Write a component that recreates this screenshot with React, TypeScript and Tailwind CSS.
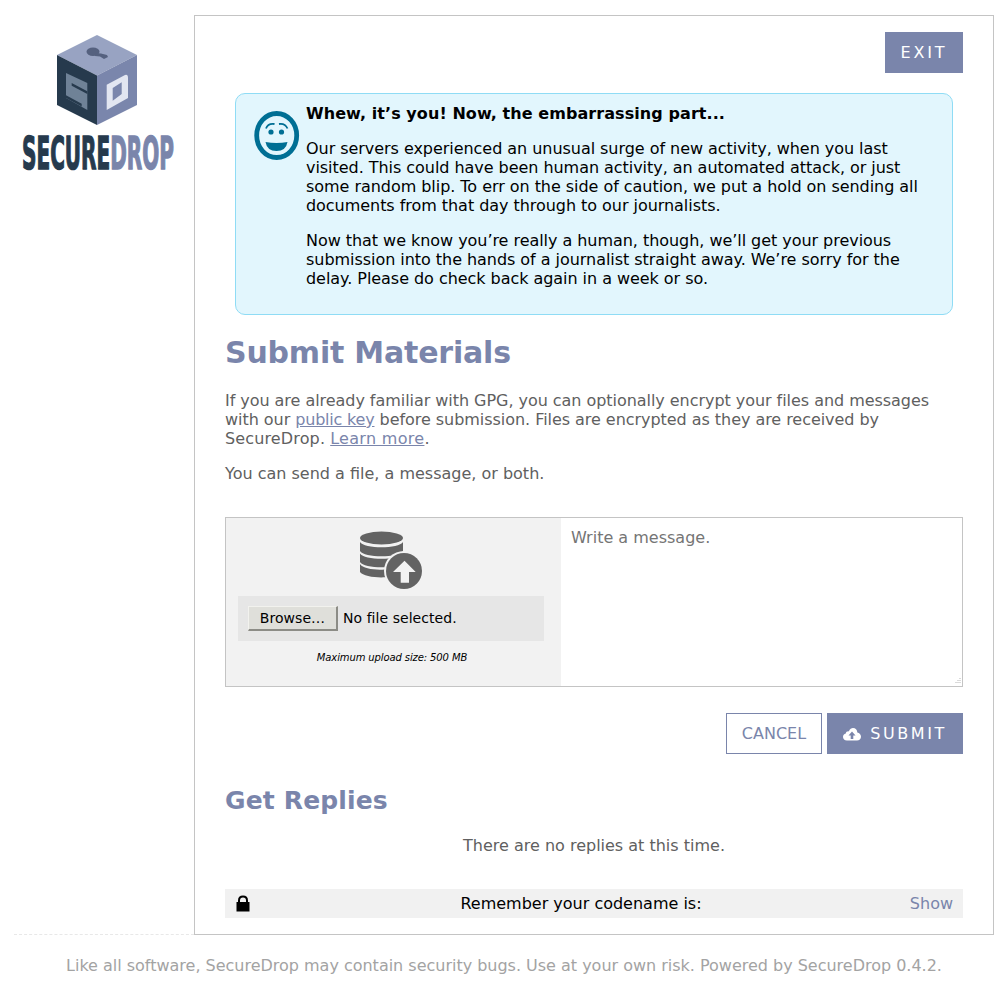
import React from "react";

function Cube() {
  return (
    <svg width="80" height="90" viewBox="0 0 80 90" className="block">
      <polygon points="40,0 80,20 40,40.500 0,20" fill="#98a3c2" />
      <polygon points="0,20 40,40.500 40,90 0,70" fill="#263a4d" />
      <polygon points="80,20 40,40.500 40,90 80,70" fill="#7a86ac" />
      <ellipse cx="36" cy="16.800" rx="6.500" ry="4.200" fill="#55617f" />
      <path d="M38 18 L44 18.500 L50 20 L51 22 L47 24 L43 21.500 L38 21Z" fill="#55617f" />
      <polygon points="9,38 30.300,48 30.300,75 9,63" fill="#6f8297" />
      <polygon points="14.700,48 30.300,56.300 30.300,59 14.700,50.700" fill="#263a4d" />
      <polygon points="9,60.300 24.700,68.700 24.700,71.400 9,63" fill="#263a4d" />
      <path fillRule="evenodd" d="M49.700 49.700 L68 40 Q71 39 71 43 L71 63 L49.700 75Z M55.700 53 L55.700 65.700 L64.700 59 L64.700 47.300Z" fill="#e2e6f1" />
    </svg>
  );
}

function Smile() {
  return (
    <svg width="48" height="52" viewBox="0 0 48 52" className="block">
      <ellipse cx="23.700" cy="25.500" rx="20" ry="22" fill="none" stroke="#006f94" strokeWidth="4.800" />
      <circle cx="18" cy="22" r="2.600" fill="#006f94" />
      <circle cx="28.500" cy="22" r="2.600" fill="#006f94" />
      <path d="M13 18.500 Q15 13 21.500 14 M26 14 Q32 13 34.500 18.500" fill="none" stroke="#006f94" strokeWidth="1.800" />
      <path d="M12.500 32 Q23.500 34 34.500 32 Q33 41 23.500 41 Q14 41 12.500 32Z" fill="#006f94" />
    </svg>
  );
}

function UploadDb() {
  return (
    <svg width="64" height="60" viewBox="0 0 64 60" className="block">
      <ellipse cx="22.500" cy="7" rx="21.500" ry="6.500" fill="#636363" />
      <path d="M1 11 C5 18 40 18 44 11 V20 C40 27 5 27 1 20Z" fill="#636363" />
      <path d="M1 22.500 C5 29.500 40 29.500 44 22.500 V31 C40 38 5 38 1 31Z" fill="#636363" />
      <path d="M1 33 C5 40 30 40 36 36 V44 C30 48 5 47 1 41Z" fill="#636363" />
      <circle cx="45" cy="40" r="20" fill="#f2f2f2" />
      <circle cx="45" cy="40" r="18" fill="#636363" />
      <path d="M45.500 29.700 L56.700 41 H50 V51.700 H41.700 V41 H34Z" fill="#f2f2f2" />
    </svg>
  );
}

function CloudUp() {
  return (
    <svg width="18" height="14" viewBox="0 0 18 14" className="block">
      <path d="M4 13.500 C1.500 13.500 0 11.800 0 10 C0 8.300 1 7 2.800 6.600 C3 4.800 4.500 4 5.800 4.400 C6.800 2 8.500 1 10 1 C12.500 1 14.300 3 14.300 5.500 C16.500 6 18 7.800 18 9.800 C18 12 16.300 13.500 14 13.500Z" fill="#ffffff" />
      <path d="M9 4.500 L12.500 8.500 H10.300 V12 H7.700 V8.500 H5.500Z" fill="#7a85ab" />
    </svg>
  );
}

function Lock() {
  return (
    <svg width="14" height="17" viewBox="0 0 14 17" className="block">
      <path d="M3 8 V5.500 C3 3 4.800 1.500 7 1.500 C9.200 1.500 11 3 11 5.500 V8" fill="none" stroke="#000" strokeWidth="2" />
      <rect x="0.500" y="7" width="13" height="9.500" fill="#000" />
    </svg>
  );
}

export default function App() {
  return (
    <div className="relative w-[1008px] h-[990px] bg-white font-['DejaVu_Sans',sans-serif] text-[16px] leading-[19px] text-[#606060] overflow-hidden tracking-[-0.045px]">
      <div className="flex pt-[15px] pl-[14px]">
        <aside className="w-[180px] shrink-0 flex flex-col items-center pt-[20px] pr-[14px] h-[920px] border-b border-dashed border-[#e8e8e8]">
          <Cube />
          <div className="mt-[11px] ml-[2px] w-[150px] h-[36px] flex justify-center items-center font-bold text-[45px] leading-[36px] tracking-[0px] whitespace-nowrap scale-x-[0.445] [-webkit-text-stroke:1.5px_currentColor]">
            <span className="text-[#263a4d]">SECURE</span>
            <span className="text-[#7a85ab]">DROP</span>
          </div>
        </aside>

        <main className="w-[800px] h-[920px] shrink-0 border border-[#c4c4c4] px-[30px] pt-[16px]">
          <div className="flex justify-end">
            <button className="w-[78px] h-[41px] bg-[#7a85ab] text-white tracking-[2.8px]">EXIT</button>
          </div>

          <div className="mt-[20px] mx-[10px] h-[222px] rounded-[10px] border border-[#8fdcf5] bg-[#e2f6fd] flex text-black pt-[10px] pl-[17px] pr-[30px]">
            <div className="w-[53px] shrink-0 pt-[6px]">
              <Smile />
            </div>
            <div>
              <p className="font-bold tracking-[0.07px]">Whew, it’s you! Now, the embarrassing part...</p>
              <p className="mt-[16px]">
                Our servers experienced an unusual surge of new activity, when you last visited. This could have been human activity, an automated attack, or just some random blip. To err on the side of caution, we put a hold on sending all documents from that day through to our journalists.
              </p>
              <p className="mt-[16px]">
                Now that we know you’re really a human, though, we’ll get your previous submission into the hands of a journalist straight away. We’re sorry for the delay. Please do check back again in a week or so.
              </p>
            </div>
          </div>

          <h1 className="mt-[19px] text-[30px] leading-[38px] font-bold text-[#7a85ab] tracking-[-0.2px]">Submit Materials</h1>
          <p className="mt-[19px]">
            If you are already familiar with GPG, you can optionally encrypt your files and messages with our <a className="text-[#7a85ab] underline tracking-[-0.2px]">public key</a> before submission. Files are encrypted as they are received by <span className="tracking-[0.14px]">SecureDrop.</span> <a className="text-[#7a85ab] underline tracking-[0.3px]">Learn more</a>.
          </p>
          <p className="mt-[16px] tracking-[0px]">You can send a file, a message, or both.</p>

          <div className="mt-[34px] h-[170px] border border-[#c4c4c4] flex">
            <div className="w-[335px] shrink-0 bg-[#f2f2f2] flex flex-col items-center pl-[12px] pr-[17px] pt-[13px]">
              <UploadDb />
              <div className="mt-[5px] w-full h-[45px] bg-[#e6e6e6] flex items-center px-[10px] text-[14px] text-black tracking-[0.05px]">
                <button className="w-[90px] h-[25px] bg-[#dfdfda] border-t border-l border-[#f2f2ee] border-r-2 border-b-2 border-r-[#8c8c86] border-b-[#8c8c86]">Browse…</button>
                <span className="ml-[5px]">No file selected.</span>
              </div>
              <p className="mt-[10px] text-[10px] leading-[14px] italic text-black tracking-[-0.11px] pl-[2px]">Maximum upload size: 500 MB</p>
            </div>
            <div className="relative flex-1 px-[10px] pt-[10px] text-[#757575] tracking-[0px]">
              Write a message.
              <svg width="8" height="8" viewBox="0 0 8 8" className="absolute right-[1px] bottom-[1px]">
                <path d="M7 1v1M5 3v1M7 3v1M3 5v1M5 5v1M7 5v1" stroke="#b5b5b5" strokeWidth="1" />
              </svg>
            </div>
          </div>

          <div className="mt-[26px] flex justify-end gap-[5px]">
            <button className="w-[96px] h-[41px] border border-[#7a85ab] text-[#7a85ab] tracking-[0px]">CANCEL</button>
            <button className="w-[136px] h-[41px] bg-[#7a85ab] text-white tracking-[2.6px] flex items-center justify-center gap-[9px]">
              <CloudUp />
              <span>SUBMIT</span>
            </button>
          </div>

          <h2 className="mt-[31px] text-[25px] leading-[32px] font-bold text-[#7a85ab] tracking-[0.15px]">Get Replies</h2>
          <p className="mt-[19px] text-center tracking-[0px]">There are no replies at this time.</p>

          <div className="relative mt-[34px] h-[29px] bg-[#f1f1f1] flex items-center justify-center pr-[26px] text-black tracking-[0px]">
            <div className="absolute left-[11px] top-[6px]">
              <Lock />
            </div>
            <span>Remember your codename is:</span>
            <a className="absolute right-[10px] top-[5px] text-[#7a85ab]">Show</a>
          </div>
        </main>
      </div>
      <p className="mt-[21px] text-center text-[#a3a3a3] tracking-[-0.01px]">Like all software, SecureDrop may contain security bugs. Use at your own risk. Powered by SecureDrop 0.4.2.</p>
    </div>
  );
}
